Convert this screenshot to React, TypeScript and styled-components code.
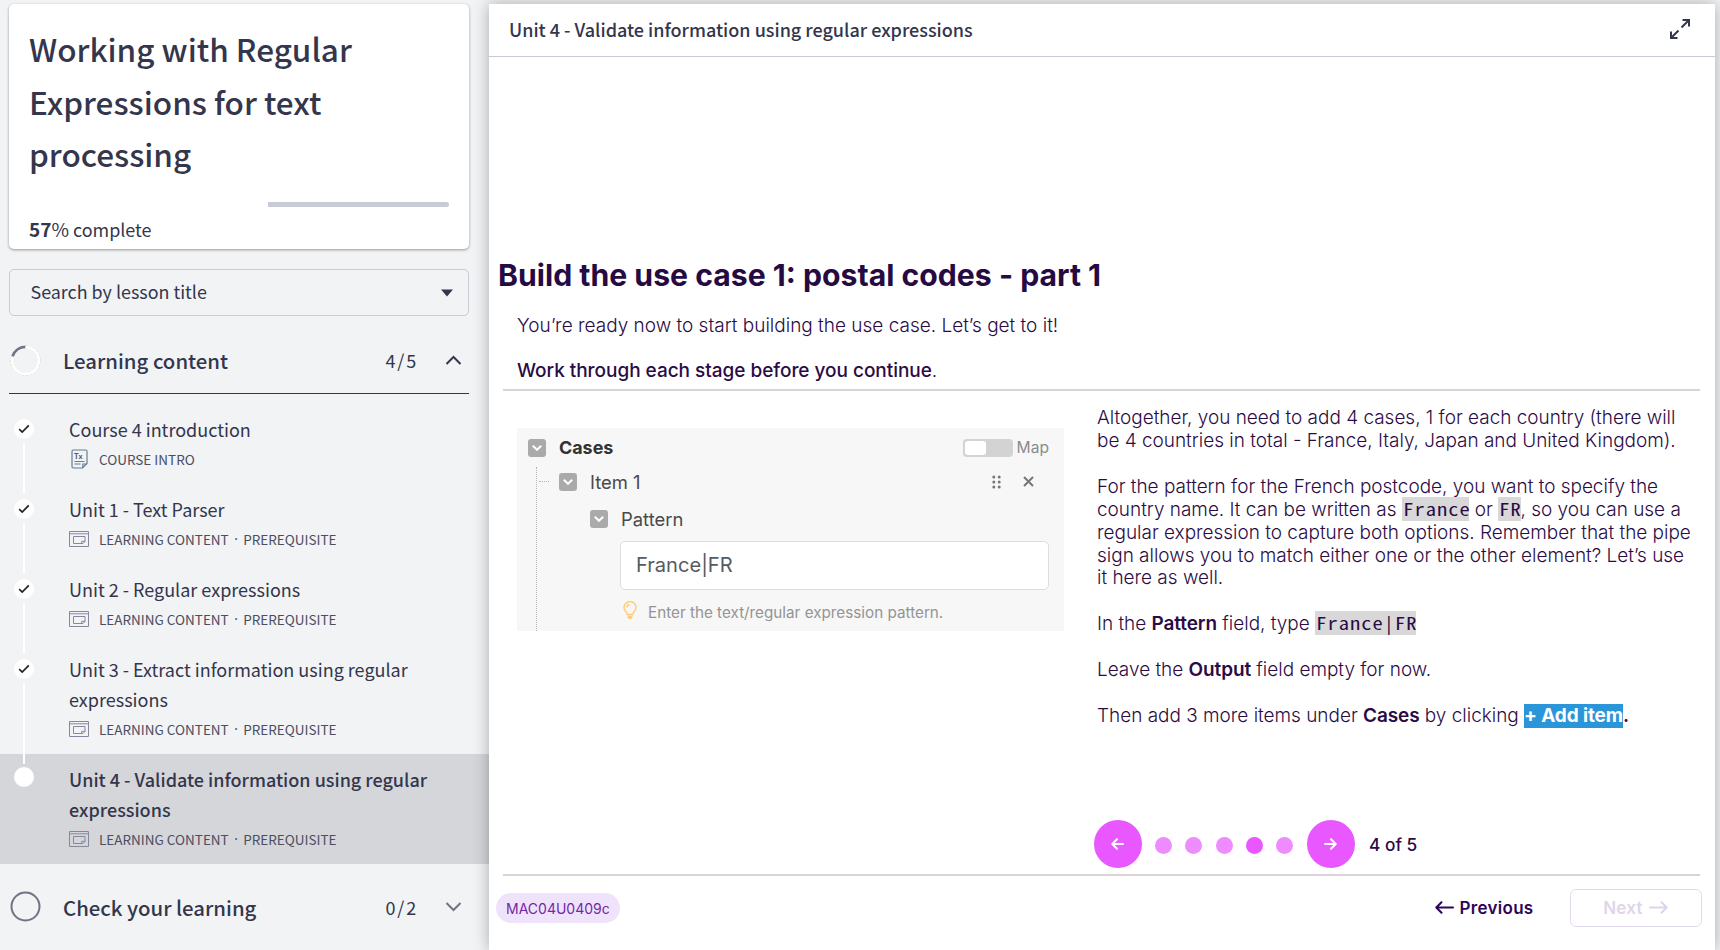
import React from 'react';
import styled, { createGlobalStyle, css } from 'styled-components';

const SOURCE = '"Noto Sans CJK SC", "Noto Sans", sans-serif';
const INTER = 'Inter, "Liberation Sans", sans-serif';

const Global = createGlobalStyle`
  *, *::before, *::after { box-sizing: border-box; }
  body { margin: 0; background: #f1f3f5; overflow: hidden; }
  h1, h2, p, ul { margin: 0; padding: 0; }
  button { font: inherit; border: 0; padding: 0; background: none; }
  svg { display: block; flex: none; }
`;

const Page = styled.div`
  display: flex;
  height: 950px;
  overflow: hidden;
  background: #f1f3f5;
  color: #33364c;
  font-family: ${SOURCE};
`;

/* ---------- Sidebar ---------- */

const Sidebar = styled.aside`
  width: 489px;
  flex: none;
  padding-top: 4px;
  display: flex;
  flex-direction: column;
`;

const CourseCard = styled.section`
  margin: 0 20px 0 9px;
  height: 261px;
  padding: 18px 20px 0;
  background: #fff;
  border-radius: 5px;
  box-shadow: 0 1px 3px rgba(0, 0, 0, 0.38);
`;

const CourseTitle = styled.h1`
  font-size: 31.5px;
  font-weight: 500;
  line-height: 52.5px;
`;

const ProgressTrack = styled.div`
  display: flex;
  justify-content: flex-end;
  height: 5px;
  margin-top: 22px;
  border-radius: 3px;
  overflow: hidden;
`;

const ProgressRest = styled.div`
  width: 43%;
  background: #c8cad6;
`;

const ProgressText = styled.p`
  margin-top: 7px;
  font-size: 17.95px;
  line-height: 30px;
  strong { font-weight: 700; font-size: 19px; }
  span { font-size: 19px; }
`;

const SearchBox = styled.div`
  display: flex;
  align-items: center;
  justify-content: space-between;
  height: 50px;
  margin: 20px 20px 0 9px;
  padding: 0 15px 3px 20.5px;
  border: 1px solid #c8cad6;
  border-radius: 5px;
  font-size: 17.9px;
  svg { margin-top: 3px; }
`;

const SectionHeader = styled.div<{ $open?: boolean }>`
  display: flex;
  align-items: center;
  margin: 0 20px 0 9px;
  height: ${p => (p.$open ? 82 : 92)}px;
  padding: ${p => (p.$open ? '11px' : '0')} 7px 0 1px;
  ${p => p.$open && css`border-bottom: 1px solid #33364c;`}
`;

const SectionTitle = styled.h2`
  flex: 1;
  margin-left: 22px;
  font-size: 20.35px;
  font-weight: 500;
  line-height: 30px;
`;

const SectionCount = styled.span`
  margin-right: 27px;
  font-size: 18px;
  line-height: 30px;
  letter-spacing: 1.8px;
`;

const Lessons = styled.ul`
  margin-top: 10px;
  list-style: none;
`;

const Lesson = styled.li<{ $active?: boolean }>`
  display: flex;
  padding: 10px 20px 10px 14px;
  background: ${p => (p.$active ? '#d5d6da' : 'transparent')};
  font-weight: ${p => (p.$active ? 500 : 400)};
`;

const Track = styled.div<{ $raised?: boolean }>`
  position: relative;
  z-index: 1;
  display: flex;
  flex-direction: column;
  align-items: center;
  gap: 5px;
  width: 20px;
  margin: ${p => (p.$raised ? '3px' : '5px')} 35px -20px 0;
`;

const Marker = styled.div`
  display: flex;
  align-items: center;
  justify-content: center;
  width: 20px;
  height: 20px;
  border-radius: 50%;
  background: #fff;
`;

const Connector = styled.div`
  flex: 1;
  width: 2px;
  background: #fff;
`;

const LessonTitle = styled.p`
  font-size: 18px;
  line-height: 30px;
`;

const LessonMeta = styled.p`
  display: flex;
  align-items: center;
  height: 30px;
  font-size: 13.5px;
  font-weight: 400;
  color: #4b4e62;
`;

const MetaIcon = styled.span`
  display: flex;
  justify-content: center;
  width: 20px;
  margin-right: 10px;
`;

const Dot = styled.span`
  width: 14.5px;
  text-align: center;
  font-family: "Noto Sans", sans-serif;
`;

/* ---------- Main panel ---------- */

const Panel = styled.main`
  display: flex;
  flex-direction: column;
  width: 1226px;
  margin-top: 4px;
  background: #fff;
  box-shadow: 0 0 15px rgba(0, 0, 0, 0.3);
  font-family: ${INTER};
  color: #2b0b45;
`;

const PanelHeader = styled.header`
  display: flex;
  align-items: center;
  justify-content: space-between;
  height: 53px;
  padding: 0 24px 3px 20px;
  border-bottom: 1px solid #c8cad6;
  color: #33364c;
  font: 500 18px/30px ${SOURCE};
`;

const Heading = styled.h1`
  margin: 198px 0 0 9px;
  font-size: 30.2px;
  font-weight: 700;
  line-height: 40px;
  color: #260a42;
`;

const Intro = styled.div`
  margin-left: 28px;
  padding-top: 8px;
  font-size: 19px;
  font-weight: 300;
  line-height: 45px;
  height: 94px;
  strong { font-weight: 500; letter-spacing: -0.03px; }
`;

const Rule = styled.div`
  flex: none;
  height: 2px;
  margin: 0 15px 0 14px;
  background: #d9d3d8;
`;

const Columns = styled.div`
  display: flex;
  height: 423px;
`;

const Example = styled.section`
  width: 547px;
  height: 203px;
  margin: 37px 33px 0 28px;
  background: #f7f7f7;
  color: #4a4a4a;
`;

const ExampleRow = styled.div<{ $h: number; $left: number }>`
  display: flex;
  align-items: center;
  height: ${p => p.$h}px;
  padding: 0 15px 0 ${p => p.$left}px;
`;

const Collapse = styled.span`
  display: flex;
  align-items: center;
  justify-content: center;
  width: 18px;
  height: 18px;
  margin-right: 13px;
  border-radius: 3px;
  background: #aaa;
`;

const NodeLabel = styled.span<{ $bold?: boolean }>`
  flex: 1;
  font-size: ${p => (p.$bold ? 17.9 : 18.4)}px;
  font-weight: ${p => (p.$bold ? 700 : 400)};
  color: ${p => (p.$bold ? '#333' : '#4a4a4a')};
`;

const Switch = styled.span`
  width: 50px;
  height: 18px;
  padding: 2px;
  border-radius: 4px;
  background: #d3d3d3;
  &::before {
    content: '';
    display: block;
    width: 21px;
    height: 14px;
    border-radius: 3px;
    background: #fff;
  }
`;

const MapLabel = styled.span`
  margin-left: 4px;
  font-size: 15.6px;
  color: #8c8c8c;
`;

const Tree = styled.div`
  margin-left: 19px;
  border-left: 1px dotted #b5b5b5;
`;

const Branch = styled.span`
  width: 10px;
  margin-right: 10px;
  border-top: 1px dotted #b5b5b5;
`;

const PatternInput = styled.div`
  height: 49px;
  margin: 0 15px 0 83px;
  padding-left: 15px;
  border: 1px solid #dedede;
  border-radius: 5px;
  background: #fff;
  font-size: 20.1px;
  line-height: 46px;
  color: #555b62;
`;

const Hint = styled.span`
  margin: 4px 0 0 11px;
  font-size: 15.25px;
  color: #949494;
`;

const Steps = styled.section`
  width: 606px;
  padding-top: 16.3px;
  font-size: 18.97px;
  font-weight: 300;
  line-height: 22.87px;
  p { margin-bottom: 22.87px; white-space: nowrap; }
  strong { font-weight: 600; letter-spacing: -0.1px; }
`;

const CodeBox = styled.code<{ $chars: number }>`
  display: inline-block;
  width: ${p => p.$chars * 11.25}px;
  height: 24px;
  margin: -2px 0 -3px;
  vertical-align: baseline;
  background: #d8d8d8;
  font: 400 17px/23px "Noto Sans Mono CJK SC", monospace;
  span {
    display: inline-block;
    padding-left: 1px;
    letter-spacing: 0.875px;
    transform: scaleX(1.2);
    transform-origin: left;
  }
`;

const AddItem = styled.span`
  padding: 0 0 1px;
  background: #2b95d9;
  color: #fff;
  font-weight: 700;
  letter-spacing: -0.1px;
`;

const Pager = styled.nav`
  display: flex;
  align-items: center;
  height: 60px;
  padding-left: 605px;
`;

const PagerButton = styled.button`
  display: flex;
  align-items: center;
  justify-content: center;
  width: 48px;
  height: 48px;
  padding: 0 2px 1px 0;
  border-radius: 50%;
  background: #e857ff;
`;

const PagerDots = styled.div`
  display: flex;
  justify-content: space-between;
  width: 138px;
  margin: 2px 14px 0 13px;
`;

const PagerDot = styled.span<{ $on?: boolean }>`
  width: 17px;
  height: 17px;
  border-radius: 50%;
  background: ${p => (p.$on ? '#e857ff' : '#ee8cff')};
`;

const PagerText = styled.span`
  margin-left: 14px;
  font-size: 17.3px;
  font-weight: 500;
`;

const Footer = styled.footer`
  display: flex;
  align-items: center;
  height: 63px;
  padding: 0 13.5px 0 7px;
`;

const Code = styled.span`
  height: 30px;
  padding: 0 12px 0 10px;
  border-radius: 15px;
  background: #efe3fb;
  color: #7326a8;
  font-size: 14px;
  line-height: 31px;
  width: 124px;
`;

const NavButton = styled.button<{ $disabled?: boolean }>`
  display: flex;
  align-items: center;
  font-size: 17px;
  font-weight: 600;
  letter-spacing: 0.3px;
  color: #2f0459;
  ${p => !p.$disabled && css`margin-left: auto; gap: 5px;`}
  ${p =>
    p.$disabled &&
    css`
      justify-content: center;
      gap: 6px;
      width: 132px;
      height: 38px;
      margin-left: 36px;
      border: 1.5px solid #e3d9ef;
      border-radius: 6px;
      color: #dfd5eb;
    `}
`;

/* ---------- Icons ---------- */

const Chevron = ({ up, color }: { up?: boolean; color: string }) => (
  <svg width="17" height="11" viewBox="0 0 17 11" fill="none" stroke={color} strokeWidth="2">
    <path d={up ? 'M1.5 9 8.5 2 15.5 9' : 'M1.5 2 8.5 9 15.5 2'} />
  </svg>
);

const Caret = () => (
  <svg width="12" height="8" viewBox="0 0 12 8"><path d="M0 .5h12L6 7.5z" fill="#33364c" /></svg>
);

const PartialRing = () => (
  <svg width="31" height="31" viewBox="0 0 31 31" fill="none">
    <circle cx="15.5" cy="15.5" r="14.6" stroke="#b9bbc4" strokeWidth=".8" strokeDasharray="2 2" />
    <circle cx="15.5" cy="15.5" r="13.5" stroke="#fff" strokeWidth="2.4" />
    <path d="M2.5 11.3A13.6 13.6 0 0 1 15.3 1.9" stroke="#707386" strokeWidth="2.6" />
  </svg>
);

const EmptyRing = () => (
  <svg width="31" height="31" viewBox="0 0 31 31" fill="none">
    <circle cx="15.5" cy="15.5" r="14" stroke="#707386" strokeWidth="2" />
  </svg>
);

const Check = () => (
  <svg width="12" height="10" viewBox="0 0 12 10" fill="none" stroke="#222" strokeWidth="1.7">
    <path d="M1.2 5.2 4.2 8 10.8 1.4" />
  </svg>
);

const DocIcon = () => (
  <svg width="17" height="20" viewBox="0 0 17 20" fill="none" stroke="#6b7c93" strokeWidth="1.2">
    <path d="M1 2.2Q1 1 2.2 1h12.600Q16 1 16 2.200V14.500L11.500 19H2.200Q1 19 1 17.800z" />
    <path d="M16 15h-4.200v4M3.500 12.500h10M3.500 15h6" />
    <text x="3" y="10" fontSize="7" fontWeight="700" fontFamily="Inter" fill="#4b5a75" stroke="none">Tx</text>
  </svg>
);

const WindowIcon = () => (
  <svg width="20" height="16" viewBox="0 0 20 16" fill="none" stroke="#85889a" strokeWidth="1">
    <path d="M.5.5h19v15H.5zM.5 2.800h19" />
    <path d="M4.500 5.500h11.500v5L14 12.500H4.500zM12.700 12.500v-2.200h3.300" />
  </svg>
);

const ExpandIcon = () => (
  <svg width="22" height="22" viewBox="0 0 22 22" fill="none" stroke="#33364c" strokeWidth="2">
    <path d="M12.500 9.500 20 2M13.500 2H20v6.500M9.500 12.500 2 20M2 13.500V20h6.500" />
  </svg>
);

const Arrow = ({ w, h, left, sw = 2 }: { w: number; h: number; left?: boolean; sw?: number }) => {
  const m = h / 2;
  return (
    <svg width={w} height={h} viewBox={`0 0 ${w} ${h}`} fill="none" stroke="currentColor" strokeWidth={sw} strokeLinecap="round" strokeLinejoin="round">
      <path
        d={
          left
            ? `M${w - 1} ${m}H1.500M${m} 1.200 1.300 ${m} ${m} ${h - 1.2}`
            : `M1 ${m}H${w - 1.5}M${w - m} 1.200 ${w - 1.3} ${m} ${w - m} ${h - 1.2}`
        }
      />
    </svg>
  );
};

const SmallChevron = () => (
  <svg width="10" height="6" viewBox="0 0 10 6" fill="none" stroke="#fff" strokeWidth="2"><path d="M.8.8 5 4.800 9.200.8" /></svg>
);

const Grip = () => (
  <svg width="9" height="14" viewBox="0 0 9 14" fill="#777">
    {[2, 7, 12].map(y => [1.8, 7.2].map(x => <circle key={`${x}-${y}`} cx={x} cy={y} r="1.500" />))}
  </svg>
);

const Cross = () => (
  <svg width="11" height="11" viewBox="0 0 11 11" stroke="#777" strokeWidth="2"><path d="M1 1l9 9M10 1l-9 9" /></svg>
);

const Bulb = () => (
  <svg width="14" height="19" viewBox="0 0 14 19" fill="none" stroke="#fbcf7c" strokeWidth="1.500">
    <path d="M4.300 13.500C4.300 11 1 9.800 1 6.500a6 6 0 0 1 12 0c0 3.300-3.300 4.500-3.300 7z" />
    <path d="M3.800 6.500A3 3 0 0 1 6.500 3.600" />
    <path d="M4.500 14.500h5v2L8.300 18H5.700l-1.200-1.500z" fill="#fbcf7c" stroke="none" />
  </svg>
);

/* ---------- Data ---------- */

interface LessonData { title: string; intro?: boolean; active?: boolean }

const lessons: LessonData[] = [
  { title: 'Course 4 introduction', intro: true },
  { title: 'Unit 1 - Text Parser' },
  { title: 'Unit 2 - Regular expressions' },
  { title: 'Unit 3 - Extract information using regular expressions' },
  { title: 'Unit 4 - Validate information using regular expressions', active: true },
];

const Mono = ({ children }: { children: string }) => (
  <CodeBox $chars={children.length}><span>{children}</span></CodeBox>
);

export default function App() {
  return (
    <Page>
      <Global />
      <Sidebar>
        <CourseCard>
          <CourseTitle>Working with Regular<br />Expressions for text<br />processing</CourseTitle>
          <ProgressTrack><ProgressRest /></ProgressTrack>
          <ProgressText><strong>57</strong><span>%</span> complete</ProgressText>
        </CourseCard>
        <SearchBox>Search by lesson title<Caret /></SearchBox>
        <SectionHeader $open>
          <PartialRing />
          <SectionTitle>Learning content</SectionTitle>
          <SectionCount>4/5</SectionCount>
          <Chevron up color="#33364c" />
        </SectionHeader>
        <Lessons>
          {lessons.map(l => (
            <Lesson key={l.title} $active={l.active}>
              <Track $raised={l.active}>
                <Marker>{!l.active && <Check />}</Marker>
                {!l.active && <Connector />}
              </Track>
              <div>
                <LessonTitle>{l.title}</LessonTitle>
                <LessonMeta>
                  <MetaIcon>{l.intro ? <DocIcon /> : <WindowIcon />}</MetaIcon>
                  {l.intro ? 'COURSE INTRO' : <>LEARNING CONTENT<Dot>·</Dot>PREREQUISITE</>}
                </LessonMeta>
              </div>
            </Lesson>
          ))}
        </Lessons>
        <SectionHeader>
          <EmptyRing />
          <SectionTitle>Check your learning</SectionTitle>
          <SectionCount>0/2</SectionCount>
          <Chevron color="#707386" />
        </SectionHeader>
      </Sidebar>

      <Panel>
        <PanelHeader>
          Unit 4 - Validate information using regular expressions
          <ExpandIcon />
        </PanelHeader>
        <Heading>Build the use case 1: postal codes - part 1</Heading>
        <Intro>
          <p>You’re ready now to start building the use case. Let’s get to it!</p>
          <p><strong>Work through each stage before you continue</strong>.</p>
        </Intro>
        <Rule />
        <Columns>
          <Example>
            <ExampleRow $h={39} $left={11}>
              <Collapse><SmallChevron /></Collapse>
              <NodeLabel $bold>Cases</NodeLabel>
              <Switch />
              <MapLabel>Map</MapLabel>
            </ExampleRow>
            <Tree>
              <ExampleRow $h={29} $left={2}>
                <Branch />
                <Collapse><SmallChevron /></Collapse>
                <NodeLabel>Item 1</NodeLabel>
                <Grip />
                <ExampleRow $h={29} $left={22} style={undefined}><Cross /></ExampleRow>
              </ExampleRow>
              <ExampleRow $h={45} $left={53}>
                <Collapse><SmallChevron /></Collapse>
                <NodeLabel>Pattern</NodeLabel>
              </ExampleRow>
              <PatternInput>France|FR</PatternInput>
              <ExampleRow $h={41} $left={86}>
                <Bulb />
                <Hint>Enter the text/regular expression pattern.</Hint>
              </ExampleRow>
            </Tree>
          </Example>
          <Steps>
            <p>
              Altogether, you need to add 4 cases, 1 for each country (there will<br />
              be 4 countries in total - France, Italy, Japan and United Kingdom).
            </p>
            <p>
              For the pattern for the French postcode, you want to specify the<br />
              country name. It can be written as <Mono>France</Mono> or <Mono>FR</Mono>, so you can use a<br />
              regular expression to capture both options. Remember that the pipe<br />
              sign allows you to match either one or the other element? Let’s use<br />
              it here as well.
            </p>
            <p>In the <strong>Pattern</strong> field, type <Mono>France|FR</Mono></p>
            <p>Leave the <strong>Output</strong> field empty for now.</p>
            <p>
              Then add 3 more items under <strong>Cases</strong> by clicking <AddItem>+ Add item</AddItem><strong>.</strong>
            </p>
          </Steps>
        </Columns>
        <Pager>
          <PagerButton style={{ color: '#fff' }}><Arrow w={13} h={12} left /></PagerButton>
          <PagerDots>
            {[1, 2, 3, 4, 5].map(n => <PagerDot key={n} $on={n === 4} />)}
          </PagerDots>
          <PagerButton style={{ color: '#fff' }}><Arrow w={13} h={12} /></PagerButton>
          <PagerText>4 of 5</PagerText>
        </Pager>
        <Rule />
        <Footer>
          <Code>MAC04U0409c</Code>
          <NavButton><Arrow w={19} h={13} left />Previous</NavButton>
          <NavButton $disabled>Next<Arrow w={19} h={13} /></NavButton>
        </Footer>
      </Panel>
    </Page>
  );
}
